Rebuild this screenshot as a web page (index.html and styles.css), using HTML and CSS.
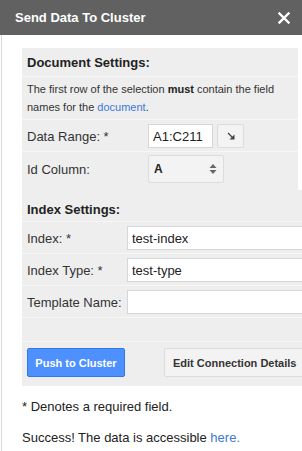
FILE: index.html
```html
<!DOCTYPE html>
<html lang="en">
<head>
    <meta charset="UTF-8">
    <title>Send Data To Cluster</title>
    <link rel="stylesheet" href="styles.css">
</head>
<body>
    <div class="title-bar">
        <span class="title">Send Data To Cluster</span>
        <svg class="close" width="12" height="12" viewBox="0 0 12 12">
            <path d="M1.5 1.5 L10.5 10.5 M10.5 1.5 L1.5 10.5" stroke="#fff" stroke-width="2.4" stroke-linecap="square"/>
        </svg>
    </div>

    <div class="sidebar">
        <div class="panel">
            <!-- Document settings -->
            <div class="section doc">
                <div class="row heading">Document Settings:</div>
                <p class="row note">The first row of the selection <b>must</b> contain the field names for the <a href="#">document</a>.</p>
                <div class="row">
                    <label class="label doc-label">Data Range: *</label>
                    <input class="text-input range" type="text" value="A1:C211">
                    <button class="small-btn">
                        <svg width="10" height="10" viewBox="0 0 10 10">
                            <path d="M2 2 L7.5 7.5" stroke="#444" stroke-width="1.3"/>
                            <path d="M8.5 3.5 L8.5 8.5 L3.5 8.5 Z" fill="#444"/>
                        </svg>
                    </button>
                </div>
                <div class="row last">
                    <label class="label doc-label">Id Column:</label>
                    <div class="select">
                        <span>A</span>
                        <svg width="8" height="12" viewBox="0 0 8 12">
                            <path d="M0.5 5 L4 1 L7.5 5 Z M0.5 7 L4 11 L7.5 7 Z" fill="#666"/>
                        </svg>
                    </div>
                </div>
            </div>

            <!-- Index settings -->
            <div class="section index">
                <div class="row heading index-heading">Index Settings:</div>
                <div class="row">
                    <label class="label index-label">Index: *</label>
                    <input class="text-input wide" type="text" value="test-index">
                </div>
                <div class="row">
                    <label class="label index-label">Index Type: *</label>
                    <input class="text-input wide" type="text" value="test-type">
                </div>
                <div class="row">
                    <label class="label index-label">Template Name:</label>
                    <input class="text-input wide" type="text" value="">
                </div>
                <div class="row empty"></div>
                <div class="row actions">
                    <button class="btn blue">Push to Cluster</button>
                    <button class="btn plain">Edit Connection Details</button>
                </div>
            </div>
        </div>

        <p class="footnote">* Denotes a required field.</p>
        <p class="footnote success">Success! The data is accessible <a href="#">here.</a></p>
    </div>
</body>
</html>
```

FILE: styles.css
```css
body {
    margin: 0;
    font-family: "Liberation Sans", Arial, sans-serif;
    color: #333;
    overflow: hidden;
}

a {
    color: #3c78d8;
    text-decoration: none;
}

.title-bar {
    display: flex;
    align-items: center;
    justify-content: space-between;
    height: 35px;
    padding: 0 12px 0 15px;
    background-color: #616161;
}

.title {
    color: #fff;
    font-size: 13px;
    font-weight: bold;
}

.close {
    margin-top: 1px;
}

/* Sidebar body with its thin left rule */
.sidebar {
    margin-left: 1px;
    border-left: 1px solid #d9d9d9;
    padding: 13px 0 0 20px;
    height: 420px;
}

.panel {
    width: 276px;
}

.section {
    background-color: #eee;
}

.doc {
    padding-bottom: 4px;
}

.index {
    width: 300px;
}

.row {
    display: flex;
    align-items: center;
    margin: 0;
    padding: 4px 5px 3px;
    border-top: 1px solid #f7f7f7;
    font-size: 13px;
}

.heading {
    border-top: none;
    height: 28px;
    padding: 0 5px;
    font-size: 13px;
    font-weight: bold;
    color: #222;
}

.index-heading {
    height: 24px;
    padding-top: 7px;
}

.note {
    display: block;
    font-size: 11px;
    line-height: 18px;
    padding: 3px 5px 3px;
    color: #333;
}

.note b {
    color: #222;
}

.last {
    padding-top: 3px;
}

.label {
    flex-shrink: 0;
}

.doc-label {
    width: 121px;
}

.index-label {
    width: 100px;
}

.text-input {
    box-sizing: border-box;
    height: 24px;
    border: 1px solid #d6d6d6;
    background-color: #fff;
    padding: 0 4px;
    font-family: "Liberation Sans", Arial, sans-serif;
    font-size: 13px;
    color: #222;
}

.range {
    width: 65px;
}

.wide {
    width: 200px;
}

.small-btn {
    display: flex;
    align-items: center;
    justify-content: center;
    box-sizing: border-box;
    width: 27px;
    height: 24px;
    margin: -1px 0 0 4px;
    padding: 0;
    background-color: #f3f3f3;
    border: 1px solid #dcdcdc;
    border-radius: 2px;
}

.select {
    display: flex;
    align-items: center;
    justify-content: space-between;
    box-sizing: border-box;
    width: 76px;
    height: 28px;
    padding: 0 6px 0 5px;
    background-color: #f3f3f3;
    border: 1px solid #dcdcdc;
    border-radius: 2px;
    font-size: 12px;
    font-weight: bold;
    color: #222;
}

.empty {
    height: 16px;
}

.actions {
    padding: 6px 5px 9px;
}

.btn {
    box-sizing: border-box;
    height: 29px;
    font-family: "Liberation Sans", Arial, sans-serif;
    font-size: 11px;
    font-weight: bold;
    border-radius: 2px;
}

.blue {
    width: 98px;
    background-color: #4d90fe;
    border: 1px solid #3079ed;
    color: #fff;
}

.plain {
    margin-left: 39px;
    padding: 0 8px;
    white-space: nowrap;
    background-color: #f3f3f3;
    border: 1px solid #dcdcdc;
    color: #333;
}

.footnote {
    margin: 13px 0 0;
    font-size: 13px;
    line-height: 15px;
    color: #222;
}

.success {
    margin-top: 16px;
}
```
